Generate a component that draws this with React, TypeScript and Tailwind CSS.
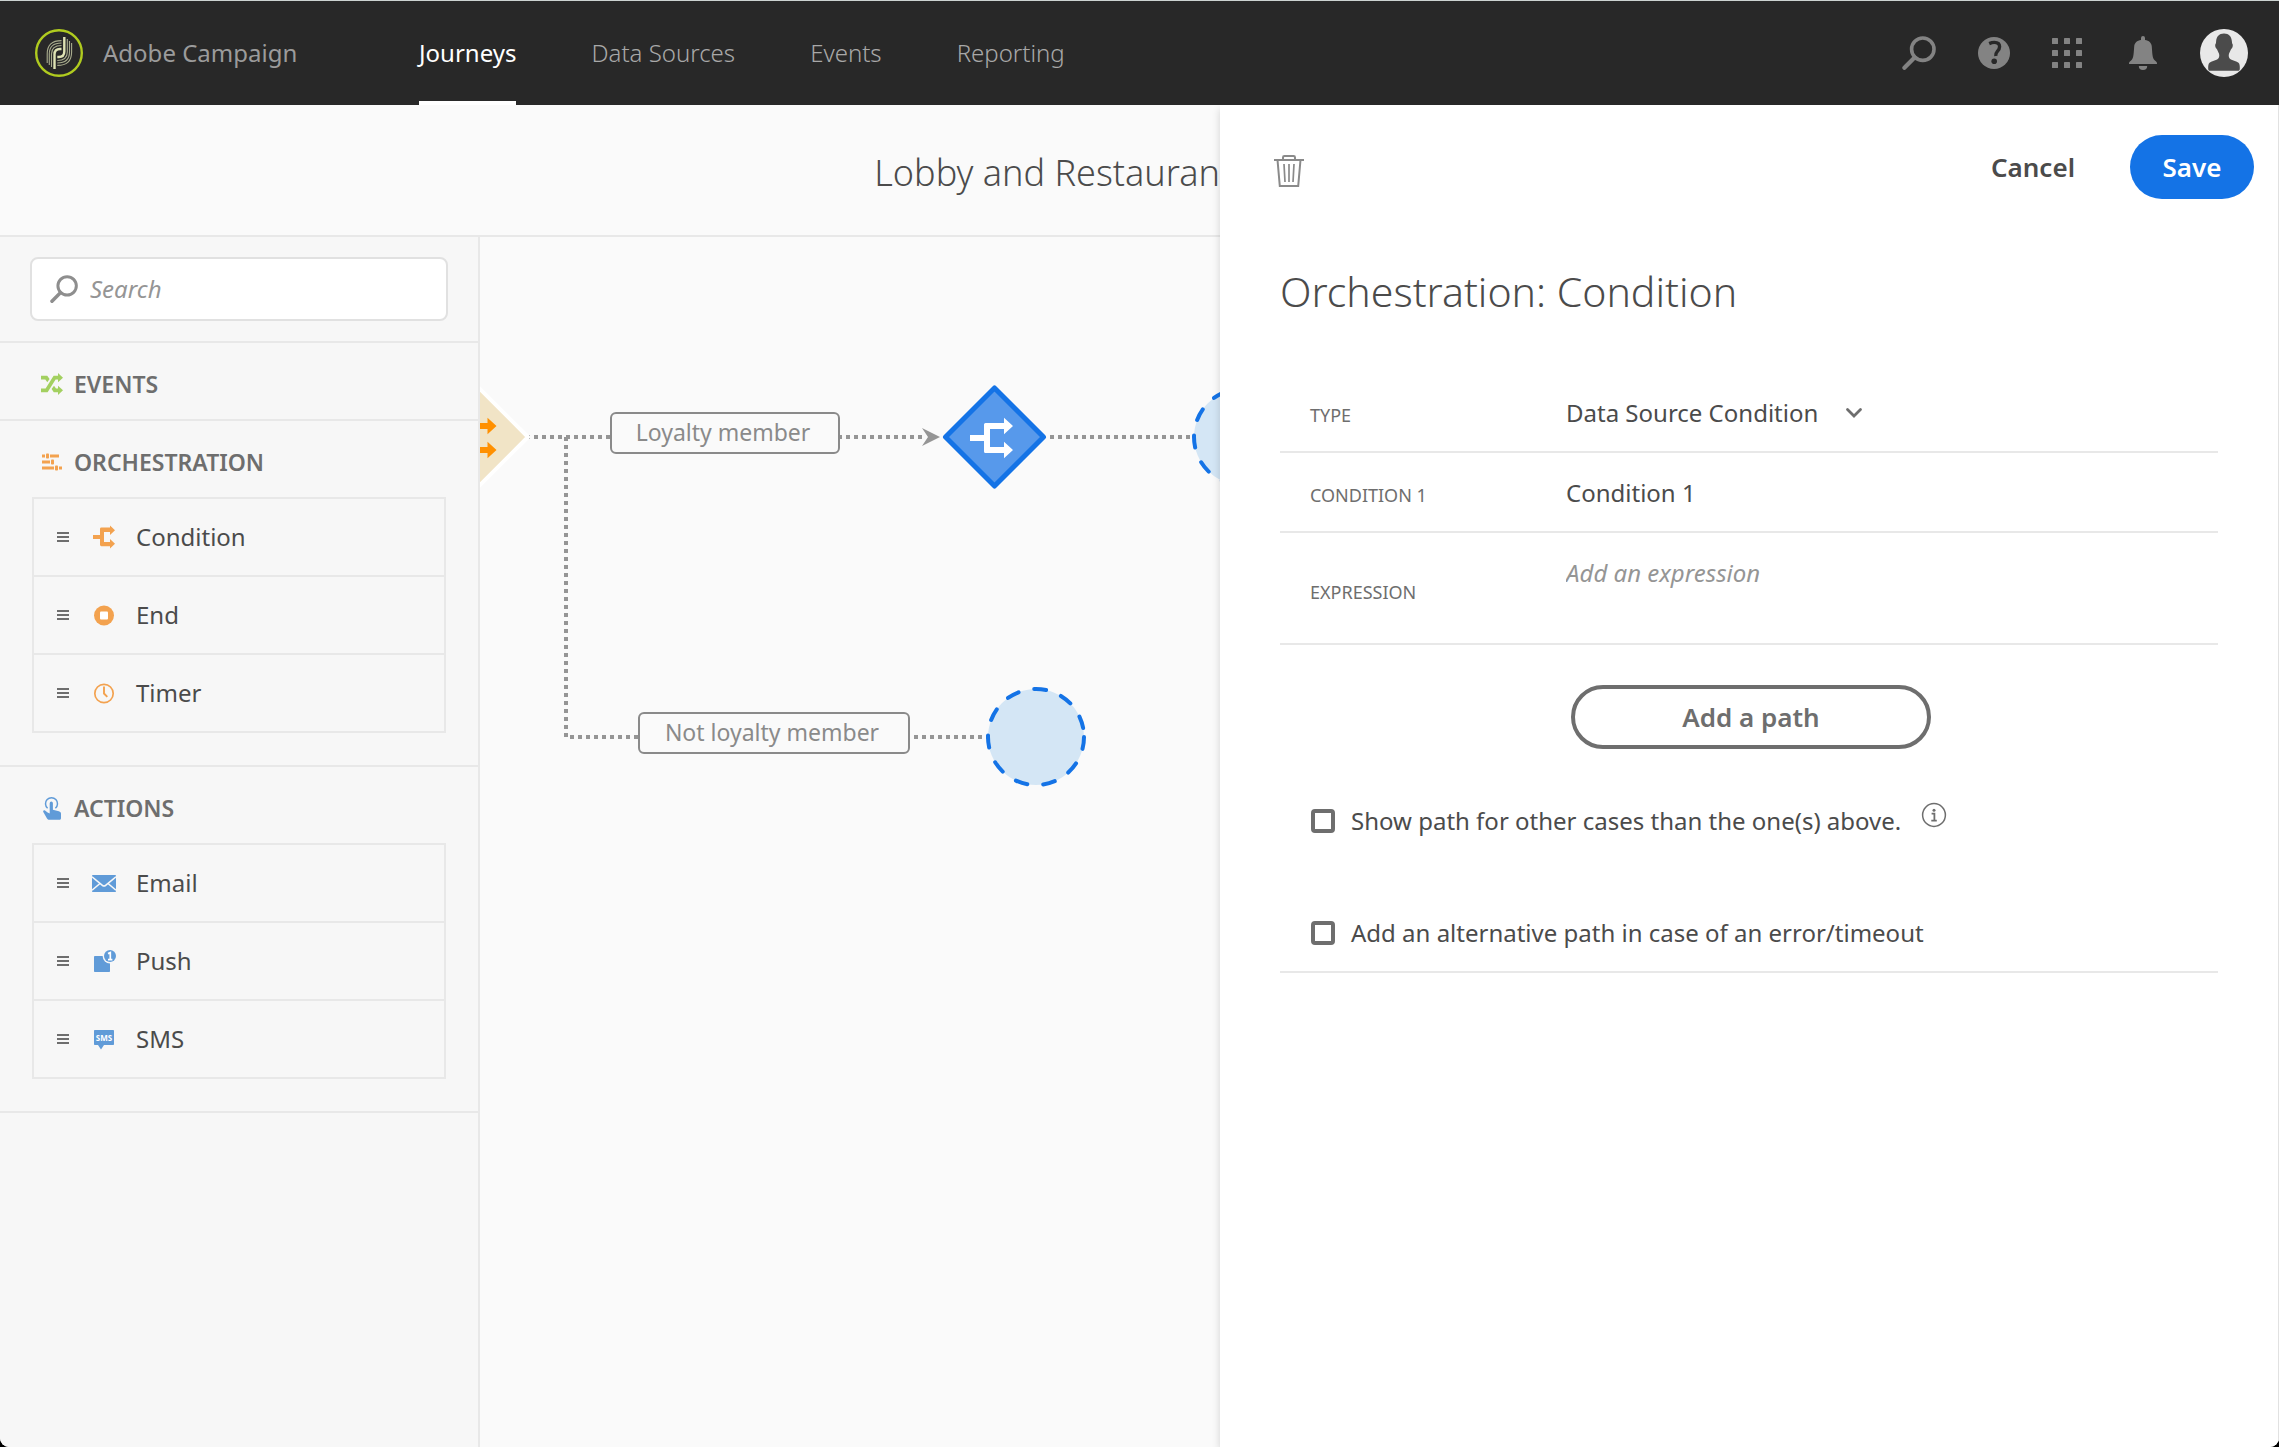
import type { ReactNode } from "react";

/* ---------- icons ---------- */

function CampaignLogo() {
  const thick = "M24.5 45V30.5Q24.5 25 30 25H31.5";
  const thin = ["M21.5 43V30Q21.5 21.5 31.5 21.5", "M19.3 41V30Q19.3 19 31.5 19", "M17.2 39V30Q17.2 16.6 31.5 16.6"];
  return (
    <svg viewBox="5 5 48 48" className="size-12" fill="none" aria-hidden="true">
      <circle cx="29" cy="29" r="22.8" stroke="#b0cb1f" strokeWidth="2.4" />
      <path d={thick} stroke="#dfe3b4" strokeWidth="2.4" />
      <path d={thick} stroke="#dfe3b4" strokeWidth="2.4" transform="rotate(180 29.4 29)" />
      {thin.map((d) => (
        <g key={d} stroke="#a9ad8e" strokeWidth="1.1">
          <path d={d} />
          <path d={d} transform="rotate(180 29.4 29)" />
        </g>
      ))}
    </svg>
  );
}

function SearchIcon({ className }: { className: string }) {
  return (
    <svg viewBox="0 0 34 34" className={className} fill="none" stroke="currentColor" aria-hidden="true">
      <circle cx="20.8" cy="13.2" r="11.2" strokeWidth="3.6" />
      <path d="M12.6 21.6L2.4 31.8" strokeWidth="4.2" strokeLinecap="round" />
    </svg>
  );
}

function HelpIcon() {
  return (
    <svg viewBox="0 0 32 32" className="size-8" aria-hidden="true">
      <circle cx="16" cy="16" r="16" fill="currentColor" />
      <path d="M11.2 6.6C13 5.8 14.6 5.4 16.4 5.4c3.4 0 5.2 1.8 5.2 4.4 0 2-1 3.4-2.4 4.9-1.2 1.3-1.7 2-1.4 4.3" fill="none" stroke="#282828" strokeWidth="3.4" />
      <circle cx="16.2" cy="24.2" r="2.8" fill="#282828" />
    </svg>
  );
}

function AppsIcon() {
  return (
    <svg viewBox="0 0 30 30" className="size-[30px]" fill="currentColor" aria-hidden="true">
      {[0, 12, 24].map((y) => [0, 12, 24].map((x) => <rect key={`${x}-${y}`} x={x} y={y} width="6" height="6" rx="0.6" />))}
    </svg>
  );
}

function BellIcon() {
  return (
    <svg viewBox="0 0 30 34" className="h-[34px] w-[30px]" fill="currentColor" aria-hidden="true">
      <path d="M13 2a2 2 0 0 1 4 0v2c4 .6 6.400 2.600 6.800 6.500.5 6 .4 11 2.600 13.500 1 1.100 2.600 2 2.600 3.200V28H1v-.8c0-1.200 1.600-2.100 2.600-3.200C5.800 21.500 5.700 16.500 6.200 10.500 6.600 6.600 9 4.600 13 4z" />
      <path d="M10.800 30h8.400a4.200 4 0 0 1-8.400 0z" />
    </svg>
  );
}

function Avatar() {
  return (
    <svg viewBox="0 0 48 48" className="size-12" aria-hidden="true">
      <circle cx="24" cy="24" r="24" fill="#e8e8e8" />
      <path
        d="M24 4.500c5 0 7.600 3.200 7.900 8 .1 1 .1 1.600.4 2.300.9.700.5 3-.2 4.200-.4.700-.9.800-1.200 1.500-.7 2-1.600 3-2 4.500-.5 2.600 0 4.400 2 5.600 2.400 1.300 5.600 1.600 7.600 3.200 1.200 1 1.400 3.400 1.300 6-.1 1.400-.6 2-1.800 2H10c-1.200 0-1.700-.6-1.800-2-.1-2.600.1-5 1.300-6 2-1.600 5.200-1.900 7.600-3.200 2-1.200 2.500-3 2-5.600-.4-1.500-1.300-2.500-2-4.500-.3-.7-.8-.8-1.200-1.500-.7-1.200-1.100-3.500-.2-4.200.3-.7.300-1.300.4-2.300.3-4.800 2.900-8 7.900-8z"
        fill="#4b4b4b"
      />
    </svg>
  );
}

function ShuffleIcon() {
  return (
    <svg viewBox="0 0 22 22" className="size-[22px] text-[#a3d060]" fill="currentColor" aria-hidden="true">
      <path d="M0 2.700H6.200L8.600 6 6.300 9.200 4.300 6.600H0z" />
      <path d="M0 15.400H4.600L12.600 2.700H17V0l5 4.700-5 4.600V6.600H14.600L6.600 19.300H0z" />
      <path d="M13 12.800l2 2.600H17V12.700l5 4.600-5 4.700V19.300H12.800L10.600 16z" />
    </svg>
  );
}

function SlidersIcon() {
  return (
    <svg viewBox="0 0 22 22" className="size-[22px] text-[#f3a24f]" fill="currentColor" aria-hidden="true">
      <path d="M1 3.500h3v3H1zM9 3.500h9v3H9zM1 9.500h8v3H1zM1 15.500h12v3H1zM18 15.500h3v3h-3z" />
      <rect x="5" y="2.500" width="3" height="5" rx="0.8" />
      <rect x="10" y="8.500" width="3" height="5" rx="0.8" />
      <rect x="14" y="14.500" width="3" height="5" rx="0.8" />
    </svg>
  );
}

function TapIcon() {
  return (
    <svg viewBox="0 0 22 24" className="h-6 w-[22px] text-[#609bd8]" fill="currentColor" aria-hidden="true">
      <path d="M6.600 12.200a6 6 0 1 1 7.800 0" fill="none" stroke="currentColor" strokeWidth="1.500" />
      <path d="M8.700 7.200a1.600 1.600 0 0 1 3.200 0v6.600l6 1.500c1.400.4 2.100 1.200 2.100 2.500V22c0 1.200-.5 1.800-1.500 1.800H8.200c-1 0-1.600-.4-2.200-1.300L2.300 16c-.6-1.300.6-2.300 1.700-1.600l2.600 2 2.100 1z" />
    </svg>
  );
}

function ConditionIcon() {
  return (
    <svg viewBox="0 0 24 24" className="size-6 text-[#f3a24f]" fill="currentColor" aria-hidden="true">
      <path d="M1 10h7V4a1.400 1.400 0 0 1 1.400-1.400H18V.5L23 5.300 18 10V7h-6v10h6v-3l5 4.700-5 4.800v-2.300H9.400A1.400 1.400 0 0 1 8 19.800V14H1z" />
    </svg>
  );
}

function EndIcon() {
  return (
    <svg viewBox="0 0 24 24" className="size-6" aria-hidden="true">
      <circle cx="12" cy="12.500" r="10" fill="#f3a24f" />
      <rect x="8" y="8.500" width="8" height="8" rx="1" fill="#fff" />
    </svg>
  );
}

function TimerIcon() {
  return (
    <svg viewBox="0 0 24 24" className="size-6 text-[#f3a24f]" fill="none" stroke="currentColor" aria-hidden="true">
      <circle cx="12" cy="12.500" r="9.200" strokeWidth="1.700" />
      <path d="M12 5.500V12.500L15.300 15.800" strokeWidth="1.900" />
    </svg>
  );
}

function EmailIcon() {
  return (
    <svg viewBox="0 0 24 24" className="size-6 text-[#609bd8]" aria-hidden="true">
      <rect y="4" width="24" height="17" rx="0.800" fill="currentColor" />
      <path d="M0 5.800L10.400 14.400Q12 15.700 13.600 14.400L24 5.800M0 19.200L8 12.500M24 19.200L16 12.500" fill="none" stroke="#f7f7f7" strokeWidth="1.600" />
    </svg>
  );
}

function PushIcon() {
  return (
    <svg viewBox="0 0 24 24" className="size-6 text-[#609bd8]" aria-hidden="true">
      <rect x="2" y="7" width="16" height="16" rx="0.800" fill="currentColor" />
      <circle cx="18" cy="7" r="7.400" fill="#f7f7f7" />
      <circle cx="18" cy="7" r="6" fill="currentColor" />
      <path d="M16 4.600L18.300 3.600V10.500M16 10.600H20.400" fill="none" stroke="#fff" strokeWidth="1.700" />
    </svg>
  );
}

function SmsIcon() {
  return (
    <svg viewBox="0 0 24 24" className="size-6 text-[#609bd8]" aria-hidden="true">
      <path d="M2.800 3H21.200a.8.800 0 0 1 .8.800V17.200a.8.800 0 0 1-.8.800H12L9 22.500 6 18H2.800A.8.800 0 0 1 2 17.200V3.800A.8.800 0 0 1 2.800 3z" fill="currentColor" />
      <text x="12" y="13.500" textAnchor="middle" fontSize="8" fontWeight="700" fill="#fff">
        SMS
      </text>
    </svg>
  );
}

function TrashIcon() {
  return (
    <svg viewBox="0 0 30 32" className="h-8 w-[30px]" fill="none" stroke="#8a8a8a" aria-hidden="true">
      <path d="M0 5H30" strokeWidth="2" />
      <path d="M9 4.500V2.400Q9 1 10.400 1H19.600Q21 1 21 2.400V4.500" strokeWidth="2" />
      <path d="M3.600 6L5.800 31H24.200L26.400 6" strokeWidth="2" />
      <path d="M10 9L11 27M15 9V27M20 9L19 27" strokeWidth="1.700" />
    </svg>
  );
}

function InfoIcon() {
  return (
    <svg viewBox="0 0 26 26" className="size-[26px]" fill="none" stroke="#6e6e6e" aria-hidden="true">
      <circle cx="13" cy="13" r="11.400" strokeWidth="1.500" />
      <circle cx="13" cy="8.300" r="1.500" fill="#6e6e6e" stroke="none" />
      <path d="M10.600 11.700H13.400V18.500M10.300 18.600H15.800" strokeWidth="1.800" />
    </svg>
  );
}

/* ---------- header ---------- */

const navItems = ["Data Sources", "Events", "Reporting"];

function IconButton({ label, children }: { label: string; children: ReactNode }) {
  return (
    <button type="button" aria-label={label} className="flex items-center justify-center text-[#838383]">
      {children}
    </button>
  );
}

function TopBar() {
  return (
    <header className="flex h-[105px] items-stretch justify-between border-t border-[#ccd3d1] bg-[#282828] pr-[31px] pl-[35px]">
      <div className="flex items-stretch">
        <a href="#home" className="flex w-[384px] items-center gap-5 text-[#9b9b9b]">
          <CampaignLogo />
          Adobe Campaign
        </a>
        <nav className="flex gap-[75px] font-light text-[#a8a8a8]">
          <a href="#journeys" aria-current="page" className="flex items-center border-y-4 border-t-transparent border-b-white font-normal text-white">
            Journeys
          </a>
          {navItems.map((item) => (
            <a key={item} href="#" className="flex items-center">
              {item}
            </a>
          ))}
        </nav>
      </div>
      <div className="flex items-center gap-[42px]">
        <IconButton label="Search">
          <SearchIcon className="size-[34px]" />
        </IconButton>
        <IconButton label="Help">
          <HelpIcon />
        </IconButton>
        <IconButton label="Applications">
          <AppsIcon />
        </IconButton>
        <span className="flex items-center gap-[42px] pl-1">
          <IconButton label="Notifications">
            <BellIcon />
          </IconButton>
          <IconButton label="Account">
            <Avatar />
          </IconButton>
        </span>
      </div>
    </header>
  );
}

/* ---------- palette ---------- */

type Item = { name: string; icon: ReactNode };

function PaletteSection({ title, icon, items = [] }: { title: string; icon: ReactNode; items?: Item[] }) {
  return (
    <section className="border-b-2 border-[#e8e8e8]">
      <h2 className="flex h-[76px] items-center gap-[11px] pt-1.5 pl-[41px] text-[23px] font-semibold text-[#6e6e6e]">
        {icon}
        {title}
      </h2>
      {items.length > 0 && (
        <ul className="mx-8 mb-8 divide-y-2 divide-[#e8e8e8] border-2 border-[#e8e8e8]">
          {items.map((item) => (
            <li key={item.name} className="box-content flex h-[76px] cursor-grab items-center pl-[23px] text-[#4b4b4b]">
              <span className="flex flex-col gap-0.5">
                <span className="h-0.5 w-3 bg-[#6e6e6e]" />
                <span className="h-0.5 w-3 bg-[#6e6e6e]" />
                <span className="h-0.5 w-3 bg-[#6e6e6e]" />
              </span>
              <span className="mr-5 ml-[23px]">{item.icon}</span>
              {item.name}
            </li>
          ))}
        </ul>
      )}
    </section>
  );
}

const orchestration: Item[] = [
  { name: "Condition", icon: <ConditionIcon /> },
  { name: "End", icon: <EndIcon /> },
  { name: "Timer", icon: <TimerIcon /> },
];

const actions: Item[] = [
  { name: "Email", icon: <EmailIcon /> },
  { name: "Push", icon: <PushIcon /> },
  { name: "SMS", icon: <SmsIcon /> },
];

function Palette() {
  return (
    <aside className="w-[480px] shrink-0 border-r-2 border-[#e8e8e8] bg-[#f7f7f7]">
      <div className="border-b-2 border-[#e8e8e8] px-[30px] py-5">
        <label className="flex h-16 items-center gap-3 rounded-lg border-2 border-[#e1e1e1] bg-white pl-[18px] text-[#8e8e8e]">
          <SearchIcon className="size-7 shrink-0" />
          <input type="search" aria-label="Search" placeholder="Search" className="w-full min-w-0 outline-none placeholder:text-[#959595] placeholder:italic" />
        </label>
      </div>
      <PaletteSection title="EVENTS" icon={<ShuffleIcon />} />
      <PaletteSection title="ORCHESTRATION" icon={<SlidersIcon />} items={orchestration} />
      <PaletteSection title="ACTIONS" icon={<TapIcon />} items={actions} />
    </aside>
  );
}

/* ---------- canvas ---------- */

function Split() {
  return <path d="M-24.500-2H-10.500V-12.500Q-10.500-14-9-14H9.500V-19.300L18.500-11 9.500-2.700V-8H-4.500V10H9.500V4.700L18.500 13 9.500 21.300V16H-9Q-10.500 16-10.500 14.500V4H-24.500z" />;
}

function DropTarget({ x, y }: { x: number; y: number }) {
  return <circle cx={x} cy={y} r="48" fill="#d4e6f5" stroke="#1473e6" strokeWidth="4" strokeDasharray="12 16" strokeLinecap="round" />;
}

/* Diagram units are pixels, with the origin at the canvas's top left corner. */
function Canvas() {
  return (
    <div className="relative min-w-0 flex-1 overflow-hidden bg-[#fafafa]">
      <svg width="800" height="560" className="absolute top-0 left-0 max-w-none" aria-hidden="true">
        <g fill="none" stroke="#959595" strokeWidth="4" strokeDasharray="4 4">
          <path d="M46 200H444" />
          <path d="M86 200V500H508" />
          <path d="M570 200H714" />
        </g>
        <path d="M442 191L460 200 442 209 448 200z" fill="#959595" />
        <g transform="translate(-2 200)">
          <path d="M0-50L50 0 0 50-50 0z" fill="#f1e4c6" stroke="#fff" strokeWidth="4" strokeLinejoin="round" />
          <g fill="#ff9000">
            <Split />
          </g>
        </g>
        <g transform="translate(514.500 200)">
          <path d="M0-49L49 0 0 49-49 0z" fill="#5799eb" stroke="#1473e6" strokeWidth="5" strokeLinejoin="round" />
          <g fill="#fff">
            <Split />
          </g>
        </g>
        <DropTarget x={762} y={200} />
        <DropTarget x={556} y={500} />
      </svg>
      <div className="absolute top-[175px] left-[130px] flex h-[42px] w-[230px] items-center justify-center rounded-md border-2 border-[#8a8a8a] bg-[#fafafa] pr-1 pb-0.5 text-[23px] text-[#8a8a8a]">
        Loyalty member
      </div>
      <div className="absolute top-[475px] left-[158px] flex h-[42px] w-[272px] items-center justify-center rounded-md border-2 border-[#8a8a8a] bg-[#fafafa] pr-1 pb-0.5 text-[23px] text-[#8a8a8a]">
        Not loyalty member
      </div>
    </div>
  );
}

/* ---------- properties panel ---------- */

const rowClass = "flex border-b-2 border-[#e8e8e8] pl-[30px]";
const labelClass = "w-64 shrink-0 text-[18px] text-[#6e6e6e]";
const boxClass = "size-6 shrink-0 appearance-none rounded border-4 border-[#6e6e6e] bg-white checked:bg-[#6e6e6e]";

function ConditionPanel() {
  return (
    <section className="relative w-[1059px] shrink-0 border-r border-[#e1e1e1] bg-white shadow-[0_4px_8px_rgba(0,0,0,0.16)]">
      <div className="flex items-start justify-between pt-[30px] pr-6 pl-[54px]">
        <button type="button" aria-label="Delete" className="pt-5">
          <TrashIcon />
        </button>
        <div className="flex items-center gap-[55px] text-[26px] font-semibold">
          <button type="button" className="text-[#4b4b4b]">
            Cancel
          </button>
          <button type="button" className="h-16 w-[124px] rounded-full bg-[#1473e6] text-white">
            Save
          </button>
        </div>
      </div>
      <form className="px-[60px]" onSubmit={(e) => e.preventDefault()}>
        <h1 className="mt-[62px] text-[41px] leading-[60px] font-light text-[#4b4b4b]">Orchestration: Condition</h1>
        <div className={`${rowClass} mt-[52px] h-20 items-center pt-0.5`}>
          <label htmlFor="type" className={`${labelClass} pt-1`}>
            TYPE
          </label>
          <div className="flex items-center gap-[26px]">
            <select id="type" className="appearance-none bg-transparent text-[#4b4b4b] outline-none">
              <option>Data Source Condition</option>
            </select>
            <svg viewBox="0 0 18 12" className="h-3 w-[18px]" fill="none" stroke="#6e6e6e" strokeWidth="2.800" strokeLinecap="round" aria-hidden="true">
              <path d="M2.500 2.500L9 9 15.500 2.500" />
            </svg>
          </div>
        </div>
        <div className={`${rowClass} h-20 items-center pt-0.5`}>
          <label htmlFor="condition" className={`${labelClass} pt-1`}>
            CONDITION 1
          </label>
          <input id="condition" type="text" defaultValue="Condition 1" className="min-w-0 flex-1 text-[#4b4b4b] outline-none" />
        </div>
        <div className={`${rowClass} h-28 items-center`}>
          <label htmlFor="expression" className={`${labelClass} pt-2`}>
            EXPRESSION
          </label>
          <textarea id="expression" placeholder="Add an expression" className="h-full min-w-0 flex-1 resize-none pt-6 leading-8 outline-none placeholder:text-[#959595] placeholder:italic" />
        </div>
        <button type="button" className="mt-10 ml-[291px] block h-16 w-[360px] rounded-full border-4 border-[#6e6e6e] text-[26px] leading-none font-semibold text-[#6e6e6e]">
          Add a path
        </button>
        <div className="mt-[53px] flex items-center pl-[31px]">
          <label className="flex items-center gap-4 text-[#4b4b4b]">
            <input type="checkbox" className={boxClass} />
            Show path for other cases than the one(s) above.
          </label>
          <button type="button" aria-label="More information" className="ml-5 pb-3">
            <InfoIcon />
          </button>
        </div>
        <div className="mt-[61px] border-b-2 border-[#e8e8e8] pt-4 pb-[22px] pl-[31px]">
          <label className="flex items-center gap-4 text-[#4b4b4b]">
            <input type="checkbox" className={boxClass} />
            Add an alternative path in case of an error/timeout
          </label>
        </div>
      </form>
    </section>
  );
}

export default function App() {
  return (
    <div className="bg-black font-['Noto_Sans',sans-serif] text-[24px] leading-8">
      <div className="flex min-h-screen flex-col overflow-hidden rounded-b-[9px] bg-[#fafafa]">
        <TopBar />
        <div className="flex flex-1 items-stretch overflow-hidden">
          <main className="flex min-w-0 flex-1 flex-col">
            <div className="flex h-[132px] items-center justify-end overflow-hidden border-b-2 border-[#e8e8e8] pt-1.5">
              <h1 className="text-[36px] leading-[54px] font-light whitespace-nowrap text-[#4b4b4b]">Lobby and Restauran</h1>
            </div>
            <div className="flex flex-1">
              <Palette />
              <Canvas />
            </div>
          </main>
          <ConditionPanel />
        </div>
      </div>
    </div>
  );
}
